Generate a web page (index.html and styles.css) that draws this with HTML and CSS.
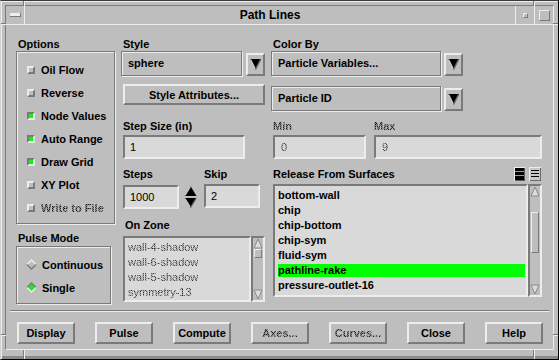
FILE: index.html
```html
<!DOCTYPE html>
<html lang="en">
<head>
<meta charset="utf-8">
<title>Path Lines</title>
<link rel="stylesheet" href="styles.css">
</head>
<body>
<div class="window">
  <span class="handle hv hv-tl"></span>
  <span class="handle hv hv-tr"></span>
  <span class="handle hv hv-bl"></span>
  <span class="handle hv hv-br"></span>
  <span class="handle hh hh-lt"></span>
  <span class="handle hh hh-rt"></span>
  <span class="handle hh hh-lb"></span>
  <span class="handle hh hh-rb"></span>
  <div class="inner">
    <div class="titlebar">
      <div class="tb-menu"><span class="menu-glyph"></span></div>
      <div class="tb-title">Path Lines</div>
      <div class="tb-btn"><span class="min-glyph"></span></div>
      <div class="tb-btn"><span class="max-glyph"></span></div>
    </div>
    <div class="client">
      <div class="form">
        <div class="col col-left">
          <div class="label">Options</div>
          <div class="group options">
            <div class="toggle"><span class="check"></span>Oil Flow</div>
            <div class="toggle"><span class="check"></span>Reverse</div>
            <div class="toggle"><span class="check on"></span>Node Values</div>
            <div class="toggle"><span class="check on"></span>Auto Range</div>
            <div class="toggle"><span class="check on"></span>Draw Grid</div>
            <div class="toggle"><span class="check"></span>XY Plot</div>
            <div class="toggle"><span class="check"></span><span class="stipple">Write to File</span></div>
          </div>
          <div class="label pulse-label">Pulse Mode</div>
          <div class="group pulse">
            <div class="toggle radio">
              <svg class="diamond" width="11" height="11" viewBox="0 0 11 11"><polygon points="0,5.5 5.5,0 11,5.5" fill="#ededed"/><polygon points="0,5.5 5.5,11 11,5.5" fill="#7a7a7a"/><polygon points="2,5.5 5.5,2 9,5.5 5.5,9" fill="#bebebe"/></svg>
              Continuous
            </div>
            <div class="toggle radio">
              <svg class="diamond" width="11" height="11" viewBox="0 0 11 11"><polygon points="0,5.5 5.5,0 11,5.5" fill="#7a7a7a"/><polygon points="0,5.5 5.5,11 11,5.5" fill="#ededed"/><polygon points="2,5.5 5.5,2 9,5.5 5.5,9" fill="#00ff00"/></svg>
              Single
            </div>
          </div>
        </div>

        <div class="col col-mid">
          <div class="label">Style</div>
          <div class="option-row">
            <div class="option option-style">sphere</div>
            <div class="arrow-btn arrow-gap4">
              <svg width="15" height="19" viewBox="0 0 15 19"><polygon points="2,4 13,4 7.5,15" fill="#000"/><polyline points="2.5,4.5 7.5,14.5" fill="none" stroke="#d0d0d0" stroke-width="1.4"/><polyline points="12.5,4.5 7.5,14.5" fill="none" stroke="#6a6a6a" stroke-width="1.4"/></svg>
            </div>
          </div>
          <div class="button style-attr">Style Attributes...</div>
          <div class="label label-step">Step Size (in)</div>
          <div class="field step-size">1</div>
          <div class="pair">
            <div class="steps">
              <div class="label flush">Steps</div>
              <div class="spin-row">
                <div class="field small-field">1000</div>
                <svg class="spinner" width="13" height="26" viewBox="0 0 13 26"><polygon points="6.5,2 12.5,12 0.5,12" fill="#000"/><polyline points="6.5,2.5 1,11.5" fill="none" stroke="#d0d0d0" stroke-width="1.2"/><polygon points="0.5,14 12.5,14 6.5,24" fill="#000"/><polyline points="1,14.5 6.5,23.5" fill="none" stroke="#d0d0d0" stroke-width="1.2"/><polyline points="12,14.5 6.5,23.5" fill="none" stroke="#6a6a6a" stroke-width="1.2"/></svg>
              </div>
            </div>
            <div class="skip">
              <div class="label flush">Skip</div>
              <div class="field small-field skip-field">2</div>
            </div>
          </div>
          <div class="label label-zone">On Zone</div>
          <div class="list zone-list">
            <div class="listbox">
              <div class="item thin"><span class="stipple">wall-4-shadow</span></div>
              <div class="item thin"><span class="stipple">wall-6-shadow</span></div>
              <div class="item thin"><span class="stipple">wall-5-shadow</span></div>
              <div class="item thin"><span class="stipple">symmetry-13</span></div>
            </div>
            <div class="scrollbar">
              <svg class="sb-arrow" width="10" height="11" viewBox="0 0 10 11"><polygon points="5,1 9,10 1,10" fill="#dcdcdc" stroke="#8a8a8a" stroke-width="1"/></svg>
              <div class="sb-track">
                <div class="thumb zone-thumb"></div>
              </div>
              <svg class="sb-arrow" width="10" height="11" viewBox="0 0 10 11"><polygon points="1,1 9,1 5,10" fill="#dcdcdc" stroke="#8a8a8a" stroke-width="1"/></svg>
            </div>
          </div>
        </div>

        <div class="col col-right">
          <div class="label">Color By</div>
          <div class="option-row">
            <div class="option option-wide">Particle Variables...</div>
            <div class="arrow-btn arrow-gap3">
              <svg width="15" height="19" viewBox="0 0 15 19"><polygon points="2,4 13,4 7.5,15" fill="#000"/><polyline points="2.5,4.5 7.5,14.5" fill="none" stroke="#d0d0d0" stroke-width="1.4"/><polyline points="12.5,4.5 7.5,14.5" fill="none" stroke="#6a6a6a" stroke-width="1.4"/></svg>
            </div>
          </div>
          <div class="option-row row-second">
            <div class="option option-wide">Particle ID</div>
            <div class="arrow-btn arrow-gap3">
              <svg width="15" height="19" viewBox="0 0 15 19"><polygon points="2,4 13,4 7.5,15" fill="#000"/><polyline points="2.5,4.5 7.5,14.5" fill="none" stroke="#d0d0d0" stroke-width="1.4"/><polyline points="12.5,4.5 7.5,14.5" fill="none" stroke="#6a6a6a" stroke-width="1.4"/></svg>
            </div>
          </div>
          <div class="minmax">
            <div class="mm-min">
              <div class="label flush"><span class="stipple">Min</span></div>
              <div class="field mm-field"><span class="stipple">0</span></div>
            </div>
            <div class="mm-max">
              <div class="label flush"><span class="stipple">Max</span></div>
              <div class="field mm-field"><span class="stipple">9</span></div>
            </div>
          </div>
          <div class="rel-row">
            <div class="label">Release From Surfaces</div>
            <div class="sel-icons">
              <svg width="11" height="14" viewBox="0 0 11 14"><rect x="0" y="0" width="11" height="14" fill="#ededed"/><rect x="1" y="1" width="10" height="13" fill="#5a5a5a"/><rect x="1" y="1" width="9" height="12" fill="#000"/><rect x="1" y="4" width="9" height="1" fill="#9a9a9a"/><rect x="1" y="8" width="9" height="1" fill="#9a9a9a"/></svg>
              <svg width="12" height="14" viewBox="0 0 12 14"><rect x="0" y="0" width="12" height="14" fill="#ededed"/><rect x="1" y="1" width="11" height="13" fill="#6a6a6a"/><rect x="1" y="1" width="10" height="12" fill="#c8c8c8"/><rect x="2" y="3" width="8" height="1" fill="#000"/><rect x="2" y="6" width="8" height="1" fill="#000"/><rect x="2" y="9" width="8" height="1" fill="#000"/></svg>
            </div>
          </div>
          <div class="list release-list">
            <div class="listbox">
              <div class="item">bottom-wall</div>
              <div class="item">chip</div>
              <div class="item">chip-bottom</div>
              <div class="item">chip-sym</div>
              <div class="item">fluid-sym</div>
              <div class="item sel">pathline-rake</div>
              <div class="item">pressure-outlet-16</div>
            </div>
            <div class="scrollbar">
              <svg class="sb-arrow" width="10" height="11" viewBox="0 0 10 11"><polygon points="5,1 9,10 1,10" fill="#dcdcdc" stroke="#8a8a8a" stroke-width="1"/></svg>
              <div class="sb-track">
                <div class="thumb release-thumb"></div>
              </div>
              <svg class="sb-arrow" width="10" height="11" viewBox="0 0 10 11"><polygon points="1,1 9,1 5,10" fill="#dcdcdc" stroke="#8a8a8a" stroke-width="1"/></svg>
            </div>
          </div>
        </div>
      </div>

      <div class="separator"></div>

      <div class="buttons">
        <div class="button action">Display</div>
        <div class="button action">Pulse</div>
        <div class="button action">Compute</div>
        <div class="button action"><span class="stipple">Axes...</span></div>
        <div class="button action"><span class="stipple">Curves...</span></div>
        <div class="button action">Close</div>
        <div class="button action">Help</div>
      </div>
    </div>
  </div>
</div>
</body>
</html>
```

FILE: styles.css
```css
* { box-sizing: border-box; }

html, body {
  margin: 0;
  padding: 0;
}

body {
  width: 559px;
  height: 360px;
  overflow: hidden;
  background: #bebebe;
  font-family: "Liberation Sans", Arial, Helvetica, sans-serif;
  font-size: 11px;
  color: #000;
}

/* ---------- window frame ---------- */
.window {
  position: relative;
  width: 559px;
  height: 360px;
  display: flex;
  background: #bebebe;
  border: 1px solid;
  border-color: #3a3a3a #000 #000 #cfcfcf;
  box-shadow: inset 1px 1px 0 #ededed, inset 0 -3px 0 #8a8a8a;
  padding: 4px 4px 9px 4px;
}

.handle {
  position: absolute;
  background: #ededed;
}
.hv { width: 1px; height: 5px; box-shadow: -1px 0 0 #7a7a7a; }
.hh { height: 1px; width: 5px; box-shadow: 0 -1px 0 #7a7a7a; }
.hv-tl { left: 23px; top: 0; }
.hv-tr { left: 533px; top: 0; }
.hv-bl { left: 23px; bottom: 0; height: 9px; }
.hv-br { left: 533px; bottom: 0; height: 9px; }
.hh-lt { left: 0; top: 23px; }
.hh-rt { right: 0; top: 23px; }
.hh-lb { left: 0; top: 334px; }
.hh-rb { right: 0; top: 334px; }

.inner {
  flex: 1;
  display: flex;
  flex-direction: column;
  border: 1px solid;
  border-color: #7a7a7a #ededed #ededed #7a7a7a;
}

/* ---------- title bar ---------- */
.titlebar {
  display: flex;
  height: 19px;
  border-bottom: 1px solid #ededed;
}

.tb-menu {
  width: 19px;
  border-right: 1px solid #ededed;
  display: flex;
  align-items: center;
  justify-content: center;
}

.menu-glyph {
  width: 11px;
  height: 4px;
  background: #ededed;
  border-right: 1px solid #7a7a7a;
  border-bottom: 1px solid #7a7a7a;
}

.tb-title {
  flex: 1;
  text-align: center;
  font-size: 12px;
  font-weight: bold;
  line-height: 18px;
}

.tb-btn {
  width: 19px;
  border-left: 1px solid #ededed;
  display: flex;
  align-items: center;
  justify-content: center;
}

.min-glyph {
  width: 5px;
  height: 5px;
  border: 1px solid;
  border-color: #ededed #7a7a7a #7a7a7a #ededed;
}

.max-glyph {
  width: 11px;
  height: 11px;
  border: 1px solid;
  border-color: #ededed #7a7a7a #7a7a7a #ededed;
}

/* ---------- client ---------- */
.client {
  flex: 1;
  display: flex;
  flex-direction: column;
}

.form {
  display: flex;
  align-items: flex-start;
  padding: 13px 0 0 10px;
}

.col { display: flex; flex-direction: column; }
.col-left { width: 100px; }
.col-mid { width: 144px; margin-left: 5px; }
.col-right { width: 271px; margin-left: 6px; }

.label {
  height: 13px;
  line-height: 13px;
  font-weight: bold;
  white-space: nowrap;
  padding-left: 2px;
}
.label.flush { padding-left: 0; }

/* insensitive (stippled) text */
.stipple {
  color: transparent;
  background-image: repeating-conic-gradient(#1e1e1e 0 25%, rgba(0, 0, 0, 0.35) 0 50%);
  background-size: 2px 2px;
  -webkit-background-clip: text;
  background-clip: text;
}

/* etched group frames */
.group {
  border: 1px solid #7a7a7a;
  box-shadow: inset 1px 1px 0 #ededed, 1px 1px 0 #ededed;
}

.options {
  width: 99px;
  padding: 6px 0 4px 10px;
}

.toggle {
  display: flex;
  align-items: center;
  height: 23px;
  gap: 6px;
  font-weight: bold;
  white-space: nowrap;
}

.check {
  width: 8px;
  height: 8px;
  border: 2px solid;
  border-color: #ededed #7a7a7a #7a7a7a #ededed;
}
.check.on {
  border-color: #7a7a7a #ededed #ededed #7a7a7a;
  background: #00ff00;
}

.pulse-label { margin-top: 8px; }

.pulse {
  width: 95px;
  margin-top: 1px;
  padding: 6px 0 4px 9px;
}
.toggle.radio { gap: 5px; }

/* option menus */
.option-row {
  display: flex;
  align-items: flex-start;
  height: 26px;
}
.row-second { margin-top: 9px; }

.option {
  height: 25px;
  line-height: 23px;
  padding-left: 6px;
  font-weight: bold;
  white-space: nowrap;
  border: 1px solid #7a7a7a;
  box-shadow: inset 1px 1px 0 #ededed, 1px 1px 0 #ededed;
}
.option-style { width: 121px; }
.option-wide { width: 170px; }

.arrow-btn {
  width: 19px;
  height: 23px;
  margin-top: 2px;
  border: 2px solid;
  border-color: #ededed #7a7a7a #7a7a7a #ededed;
  display: flex;
  align-items: center;
  justify-content: center;
}
.arrow-gap4 { margin-left: 4px; }
.arrow-gap3 { margin-left: 3px; }

/* push buttons */
.button {
  display: flex;
  align-items: center;
  justify-content: center;
  font-weight: bold;
  white-space: nowrap;
  border: 2px solid;
  border-color: #ededed #7a7a7a #7a7a7a #ededed;
}

.style-attr {
  width: 142px;
  height: 21px;
  margin: 7px 0 0 2px;
}

/* text fields */
.field {
  height: 24px;
  line-height: 20px;
  padding-left: 5px;
  background: #d9d9d9;
  border: 2px solid;
  border-color: #7a7a7a #ededed #ededed #7a7a7a;
  white-space: nowrap;
}

.label-step { margin-top: 15px; }

.step-size {
  width: 122px;
  margin: 2px 0 0 2px;
}

.pair {
  display: flex;
  margin: 9px 0 0 2px;
}

.spin-row {
  display: flex;
  align-items: center;
  gap: 5px;
  margin-top: 3px;
}

.small-field { width: 56px; }

.skip { margin-left: 7px; }
.skip-field { margin-top: 3px; }

.label-zone {
  margin-top: 9px;
  padding-left: 4px;
}

/* lists */
.list {
  display: flex;
  margin-left: 2px;
}

.zone-list {
  width: 142px;
  height: 66px;
  margin-top: 4px;
}

.release-list {
  width: 269px;
  height: 113px;
  margin-top: 3px;
}

.listbox {
  flex: 1;
  overflow: hidden;
  background: #d9d9d9;
  border: 2px solid;
  border-color: #7a7a7a #ededed #ededed #7a7a7a;
  padding-top: 2px;
}

.item {
  height: 15px;
  line-height: 13px;
  padding: 1px 0;
  margin: 0 1px 0 3px;
  font-weight: bold;
  white-space: nowrap;
  background-clip: content-box;
}
.item.thin { font-weight: normal; }
.item.sel { background-color: #00ff00; }

.scrollbar {
  width: 14px;
  display: flex;
  flex-direction: column;
  background: #bebebe;
  border: 2px solid;
  border-color: #7a7a7a #ededed #ededed #7a7a7a;
}

.sb-arrow { flex: none; display: block; }

.sb-track {
  flex: 1;
  display: flex;
  flex-direction: column;
  align-items: center;
}

.thumb {
  width: 8px;
  border: 1px solid;
  border-color: #ededed #7a7a7a #7a7a7a #ededed;
}
.zone-thumb { height: 9px; margin-top: 0; }
.release-thumb { height: 41px; margin-top: 15px; }

/* min / max */
.minmax {
  display: flex;
  margin: 8px 0 0 2px;
}
.mm-min { width: 93px; }
.mm-max { width: 168px; margin-left: 8px; }
.mm-field { margin-top: 2px; padding-left: 6px; }

.rel-row {
  display: flex;
  justify-content: space-between;
  align-items: flex-start;
  height: 13px;
  margin-top: 9px;
}

.sel-icons {
  display: flex;
  gap: 4px;
  margin: -1px 1px 0 0;
}
.sel-icons svg { display: block; }

/* bottom */
.separator {
  height: 2px;
  margin: 6px 4px 0 4px;
  border-top: 1px solid #7a7a7a;
  border-bottom: 1px solid #ededed;
}

.buttons {
  display: flex;
  justify-content: space-between;
  margin: 10px 10px 0 11px;
}

.button.action {
  width: 58px;
  height: 22px;
}
```
